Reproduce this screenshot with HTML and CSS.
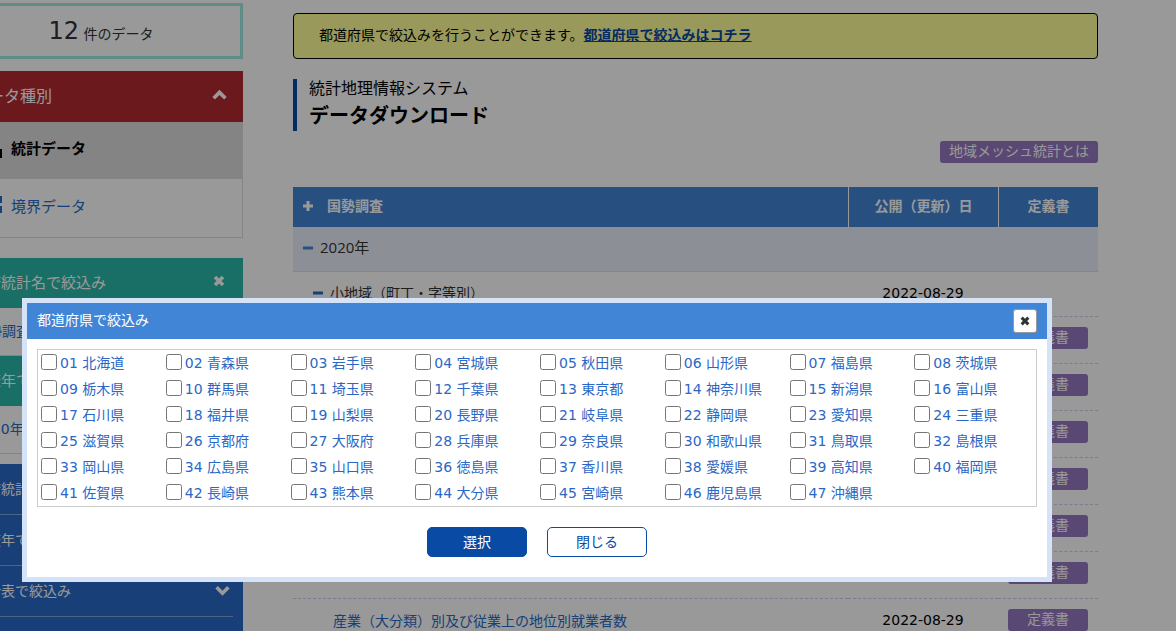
FILE: index.html
```html
<!DOCTYPE html>
<html lang="ja">
<head>
  <meta charset="UTF-8">
  <title>統計地理情報システム データダウンロード</title>
  <link rel="stylesheet" href="styles.css">
</head>
<body>

  <div class="page">
    <aside class="sidebar">
      <div class="count"><span class="count-num">12</span> 件のデータ</div>

      <section class="type">
        <button class="side-head red">データ種別
          <svg class="icon-chevron" viewBox="0 0 14 10"><path d="M1.5 8.5 L7 3 L12.5 8.5"/></svg>
        </button>
        <a href="#" class="type-item active">
          <svg class="icon-type" viewBox="0 0 22 22"><path d="M0 11h5v9H0zM6 4h5v16H6zM12 8h4v12h-4zM17 11h5v9h-5z"/></svg>
          統計データ
        </a>
        <a href="#" class="type-item">
          <svg class="icon-type" viewBox="0 0 22 22"><path d="M0 0h10v7H0zM13 0h9v7h-9zM0 10h10v7H0zM13 10h9v7h-9z"/></svg>
          境界データ
        </a>
      </section>

      <section class="filters">
        <button class="side-head teal">政府統計名で絞込み
          <svg class="icon-times" viewBox="0 0 12 12"><path d="M2 2 L10 10 M10 2 L2 10"/></svg>
        </button>
        <a href="#" class="filter-value">国勢調査</a>
        <button class="side-head teal">調査年で絞込み
          <svg class="icon-times" viewBox="0 0 12 12"><path d="M2 2 L10 10 M10 2 L2 10"/></svg>
        </button>
        <a href="#" class="filter-value">2020年</a>
      </section>

      <nav class="narrow">
        <button class="narrow-item">政府統計名で絞込み
          <svg class="icon-chevron" viewBox="0 0 14 10"><path d="M1.5 2 L7 7.5 L12.5 2"/></svg>
        </button>
        <button class="narrow-item">調査年で絞込み
          <svg class="icon-chevron" viewBox="0 0 14 10"><path d="M1.5 2 L7 7.5 L12.5 2"/></svg>
        </button>
        <button class="narrow-item">統計表で絞込み
          <svg class="icon-chevron" viewBox="0 0 14 10"><path d="M1.5 2 L7 7.5 L12.5 2"/></svg>
        </button>
      </nav>
    </aside>

    <main class="main">
      <p class="notice">都道府県で絞込みを行うことができます。<a href="#">都道府県で絞込みはコチラ</a></p>

      <header class="title">
        <p>統計地理情報システム</p>
        <h1>データダウンロード</h1>
      </header>

      <div class="mesh"><a href="#" class="tag">地域メッシュ統計とは</a></div>

      <table class="data">
        <thead>
          <tr>
            <th class="name"><svg class="icon-plus" viewBox="0 0 10 10"><path d="M5 0 V10 M0 5 H10"/></svg>国勢調査</th>
            <th class="date">公開（更新）日</th>
            <th class="def">定義書</th>
          </tr>
        </thead>
        <tbody>
          <tr class="year"><td colspan="3"><svg class="icon-minus" viewBox="0 0 10 10"><path d="M0 5 H10"/></svg>2020年</td></tr>
          <tr class="area">
            <td><svg class="icon-minus" viewBox="0 0 10 10"><path d="M0 5 H10"/></svg>小地域（町丁・字等別）</td>
            <td>2022-08-29</td>
            <td></td>
          </tr>
          <tr>
            <td><a href="#">男女別人口総数及び世帯総数</a></td>
            <td>2022-08-29</td>
            <td><a href="#" class="tag">定義書</a></td>
          </tr>
          <tr>
            <td><a href="#">年齢（５歳階級、４区分）別、男女別人口</a></td>
            <td>2022-08-29</td>
            <td><a href="#" class="tag">定義書</a></td>
          </tr>
          <tr>
            <td><a href="#">世帯人員別一般世帯数</a></td>
            <td>2022-08-29</td>
            <td><a href="#" class="tag">定義書</a></td>
          </tr>
          <tr>
            <td><a href="#">世帯の家族類型別一般世帯数</a></td>
            <td>2022-08-29</td>
            <td><a href="#" class="tag">定義書</a></td>
          </tr>
          <tr>
            <td><a href="#">住宅の種類・所有の関係別一般世帯数</a></td>
            <td>2022-08-29</td>
            <td><a href="#" class="tag">定義書</a></td>
          </tr>
          <tr>
            <td><a href="#">住宅の建て方別世帯数</a></td>
            <td>2022-08-29</td>
            <td><a href="#" class="tag">定義書</a></td>
          </tr>
          <tr>
            <td><a href="#">産業（大分類）別及び従業上の地位別就業者数</a></td>
            <td>2022-08-29</td>
            <td><a href="#" class="tag">定義書</a></td>
          </tr>
        </tbody>
      </table>
    </main>
  </div>

  <div class="overlay"></div>

  <div class="modal" role="dialog" aria-labelledby="modal-title">
    <div class="modal-head">
      <h2 id="modal-title">都道府県で絞込み</h2>
      <button class="close" aria-label="閉じる"><svg class="icon-times" viewBox="0 0 12 12"><path d="M2 2 L10 10 M10 2 L2 10"/></svg></button>
    </div>
    <form class="modal-body">
      <div class="prefs">
        <label><input type="checkbox">01 北海道</label>
        <label><input type="checkbox">02 青森県</label>
        <label><input type="checkbox">03 岩手県</label>
        <label><input type="checkbox">04 宮城県</label>
        <label><input type="checkbox">05 秋田県</label>
        <label><input type="checkbox">06 山形県</label>
        <label><input type="checkbox">07 福島県</label>
        <label><input type="checkbox">08 茨城県</label>
        <label><input type="checkbox">09 栃木県</label>
        <label><input type="checkbox">10 群馬県</label>
        <label><input type="checkbox">11 埼玉県</label>
        <label><input type="checkbox">12 千葉県</label>
        <label><input type="checkbox">13 東京都</label>
        <label><input type="checkbox">14 神奈川県</label>
        <label><input type="checkbox">15 新潟県</label>
        <label><input type="checkbox">16 富山県</label>
        <label><input type="checkbox">17 石川県</label>
        <label><input type="checkbox">18 福井県</label>
        <label><input type="checkbox">19 山梨県</label>
        <label><input type="checkbox">20 長野県</label>
        <label><input type="checkbox">21 岐阜県</label>
        <label><input type="checkbox">22 静岡県</label>
        <label><input type="checkbox">23 愛知県</label>
        <label><input type="checkbox">24 三重県</label>
        <label><input type="checkbox">25 滋賀県</label>
        <label><input type="checkbox">26 京都府</label>
        <label><input type="checkbox">27 大阪府</label>
        <label><input type="checkbox">28 兵庫県</label>
        <label><input type="checkbox">29 奈良県</label>
        <label><input type="checkbox">30 和歌山県</label>
        <label><input type="checkbox">31 鳥取県</label>
        <label><input type="checkbox">32 島根県</label>
        <label><input type="checkbox">33 岡山県</label>
        <label><input type="checkbox">34 広島県</label>
        <label><input type="checkbox">35 山口県</label>
        <label><input type="checkbox">36 徳島県</label>
        <label><input type="checkbox">37 香川県</label>
        <label><input type="checkbox">38 愛媛県</label>
        <label><input type="checkbox">39 高知県</label>
        <label><input type="checkbox">40 福岡県</label>
        <label><input type="checkbox">41 佐賀県</label>
        <label><input type="checkbox">42 長崎県</label>
        <label><input type="checkbox">43 熊本県</label>
        <label><input type="checkbox">44 大分県</label>
        <label><input type="checkbox">45 宮崎県</label>
        <label><input type="checkbox">46 鹿児島県</label>
        <label><input type="checkbox">47 沖縄県</label>
      </div>
      <div class="actions">
        <button type="button" class="btn primary">選択</button>
        <button type="button" class="btn">閉じる</button>
      </div>
    </form>
  </div>

</body>
</html>
```

FILE: styles.css
```css
* {
  box-sizing: border-box;
}

body {
  margin: 0;
  height: 100vh;
  overflow: hidden;
  background: #fff;
  color: #000;
  font-family: "DejaVu Sans", "Noto Sans CJK JP", sans-serif;
  font-size: 14px;
  line-height: 22px;
}

h1, h2, p {
  margin: 0;
}

a {
  color: #286ac8;
  text-decoration: none;
}

button {
  font-family: inherit;
  cursor: pointer;
}

svg {
  flex: none;
  fill: none;
  stroke: currentColor;
}

.icon-chevron {
  width: 15px;
  height: 11px;
  stroke-width: 3.4;
}

.icon-times {
  width: 12px;
  height: 12px;
  stroke-width: 3.6;
}

.icon-plus,
.icon-minus {
  width: 10px;
  height: 10px;
  stroke-width: 3;
}

.page {
  display: flex;
  gap: 50px;
  margin-left: -41px;
  padding-right: 78px;
}

/* sidebar */
.sidebar {
  flex: none;
  width: 284px;
  padding-top: 3px;
}

.count {
  height: 56px;
  margin-bottom: 12px;
  border: 3px solid #a0e9e1;
  color: #333;
  line-height: 50px;
  text-align: center;
}

.count-num {
  font-size: 24px;
}

.side-head {
  display: flex;
  align-items: center;
  justify-content: space-between;
  width: 100%;
  height: 50px;
  padding: 0 18px 4px 12px;
  border: 0;
  color: #fff;
  font-size: 15px;
}

.red {
  height: 51px;
  padding: 0 16px 4px 13px;
  background: #b22b30;
  font-size: 16px;
}

.teal {
  background: #2bb7aa;
}

.type {
  margin-bottom: 20px;
}

.type-item {
  display: flex;
  align-items: center;
  gap: 9px;
  height: 59px;
  padding: 0 20px 2px;
  border: 1px solid #ddd;
  border-top: 0;
  font-size: 15px;
}

.type-item.active {
  height: 57px;
  background: #ddd;
  color: #000;
  font-weight: bold;
}

.icon-type {
  width: 22px;
  height: 22px;
  fill: currentColor;
  stroke: none;
}

.filters {
  margin-bottom: 10px;
}

.filter-value {
  display: block;
  height: 48px;
  padding-left: 14px;
  border: 1px solid #ddd;
  border-top: 0;
  line-height: 46px;
}

.narrow {
  padding: 0 10px 16px;
  background: #286ac8;
}

.narrow-item {
  display: flex;
  align-items: center;
  justify-content: space-between;
  width: 100%;
  height: 51px;
  padding: 0 3px 2px 4px;
  border: 0;
  border-bottom: 1px solid #7ea6de;
  background: none;
  color: #fff;
  font-size: 14px;
}

/* main column */
.main {
  flex: 1;
  padding-top: 13px;
}

.notice {
  margin-bottom: 20px;
  padding: 10px 25px 12px;
  border: 1px solid #000;
  border-radius: 4px;
  background: #ffff99;
}

.notice a {
  color: #084aa4;
  font-weight: bold;
  text-decoration: underline;
}

.title {
  margin-bottom: 10px;
  padding-left: 12px;
  border-left: 4px solid #084aa4;
}

.title p {
  font-size: 16px;
  line-height: 20px;
}

.title h1 {
  padding-top: 2px;
  font-size: 20px;
  line-height: 30px;
}

.mesh {
  display: flex;
  justify-content: flex-end;
  margin-bottom: 24px;
}

.tag {
  display: block;
  height: 22px;
  padding: 0 9px;
  border-radius: 3px;
  background: #9678c1;
  color: #fff;
  line-height: 20px;
  text-align: center;
}

.data {
  width: 100%;
  border-collapse: separate;
  border-spacing: 0;
  table-layout: fixed;
}

.data th {
  height: 40px;
  padding: 0 0 2px;
  border-left: 1px solid #fff;
  background: #4185d7;
  color: #fff;
}

.data .name {
  padding-left: 10px;
  border-left: 0;
  text-align: left;
}

.data .date {
  width: 150px;
}

.data .def {
  width: 100px;
}

.data td {
  height: 47px;
  padding: 0 10px 4px;
  border-bottom: 1px dashed #c6d3e8;
  text-align: center;
}

.data td:first-child {
  padding: 0 10px 2px 40px;
  text-align: left;
}

.data .icon-plus {
  margin-right: 14px;
}

.data .icon-minus {
  margin-right: 7px;
  color: #286ac8;
}

.data .year td {
  height: 45px;
  padding: 0 10px 4px;
  border-bottom: 1px solid #d5dff0;
  background: #e9f0fa;
  color: #333;
  font-family: "Open Sans", "Noto Sans CJK JP", sans-serif;
  font-size: 15px;
}

.data .year .icon-minus {
  color: #4185d7;
}

.data .area td {
  height: 45px;
  padding-bottom: 2px;
}

.data .area td:first-child {
  padding-left: 20px;
  color: #333;
}

/* prefecture dialog */
.overlay {
  position: fixed;
  inset: 0;
  background: rgba(0, 0, 0, 0.4);
}

.modal {
  position: fixed;
  top: 298px;
  left: 22px;
  right: 124px;
  border: 5px solid #d4e3f7;
  background: #fff;
}

.modal-head {
  display: flex;
  align-items: center;
  justify-content: space-between;
  height: 36px;
  padding: 0 10px;
  background: #4185d7;
  color: #fff;
}

.modal-head h2 {
  padding-bottom: 2px;
  font-size: 14px;
  font-weight: normal;
}

.close {
  display: flex;
  align-items: center;
  justify-content: center;
  width: 24px;
  height: 24px;
  padding: 0;
  border: 1px solid #999;
  border-radius: 3px;
  background: #fff;
  color: #333;
}

.close .icon-times {
  width: 10px;
  height: 10px;
}

.modal-body {
  padding: 10px 10px 20px;
}

.prefs {
  display: grid;
  grid-template-columns: repeat(8, 1fr);
  border: 1px solid #ccc;
}

.prefs label {
  display: flex;
  align-items: center;
  height: 26px;
  padding-left: 3px;
  color: #2a67c6;
  white-space: nowrap;
}

.prefs input {
  width: 16px;
  height: 16px;
  margin: 0 3px 2px 0;
}

.actions {
  display: flex;
  justify-content: center;
  gap: 20px;
  margin-top: 20px;
}

.btn {
  width: 100px;
  height: 30px;
  padding: 0 0 2px;
  border: 1px solid #084aa4;
  border-radius: 5px;
  background: #fff;
  color: #084aa4;
  font-size: 14px;
}

.btn.primary {
  background: #084aa4;
  color: #fff;
}
```
